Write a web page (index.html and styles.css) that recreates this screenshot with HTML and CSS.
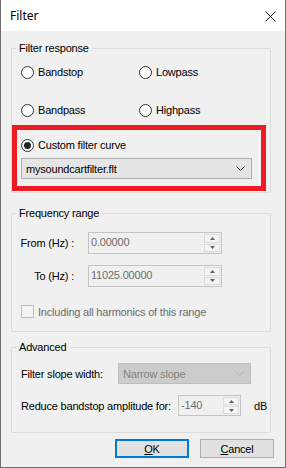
FILE: index.html
```html
<!DOCTYPE html>
<html lang="en">
<head>
    <meta charset="UTF-8">
    <title>Filter</title>
    <link rel="stylesheet" href="styles.css">
</head>
<body>
    <div class="window">
        <div class="titlebar">
            <span class="title">Filter</span>
            <svg class="close" width="11" height="11" viewBox="0 0 11 11">
                <path d="M0.5 0.5 L10.5 10.5 M10.5 0.5 L0.5 10.5" stroke="#111" stroke-width="1" fill="none"/>
            </svg>
        </div>

        <div class="content">
            <fieldset class="group group-response">
                <legend>Filter response</legend>
                <div class="radio-grid">
                    <label class="radio"><span class="circle"></span>Bandstop</label>
                    <label class="radio"><span class="circle"></span>Lowpass</label>
                    <label class="radio"><span class="circle"></span>Bandpass</label>
                    <label class="radio"><span class="circle"></span>Highpass</label>
                </div>
                <label class="radio custom"><span class="circle checked"></span>Custom filter curve</label>
                <div class="combo">
                    <span>mysoundcartfilter.flt</span>
                    <svg width="9" height="5" viewBox="0 0 9 5"><path d="M0.5 0.5 L4.5 4.5 L8.5 0.5" stroke="#333" fill="none"/></svg>
                </div>
            </fieldset>

            <fieldset class="group group-range">
                <legend>Frequency range</legend>
                <div class="field-row">
                    <span class="field-label">From (Hz) :</span>
                    <div class="spin spin-wide">
                        <span class="value">0.00000</span>
                        <div class="arrows">
                            <span><svg width="5" height="3" viewBox="0 0 5 3"><path d="M2.5 0 L5 3 L0 3 Z" fill="#606060"/></svg></span>
                            <span><svg width="5" height="3" viewBox="0 0 5 3"><path d="M0 0 L5 0 L2.5 3 Z" fill="#606060"/></svg></span>
                        </div>
                    </div>
                </div>
                <div class="field-row row-to">
                    <span class="field-label">To (Hz) :</span>
                    <div class="spin spin-wide">
                        <span class="value">11025.00000</span>
                        <div class="arrows">
                            <span><svg width="5" height="3" viewBox="0 0 5 3"><path d="M2.5 0 L5 3 L0 3 Z" fill="#606060"/></svg></span>
                            <span><svg width="5" height="3" viewBox="0 0 5 3"><path d="M0 0 L5 0 L2.5 3 Z" fill="#606060"/></svg></span>
                        </div>
                    </div>
                </div>
                <label class="check"><span class="box"></span>Including all harmonics of this range</label>
            </fieldset>

            <fieldset class="group group-advanced">
                <legend>Advanced</legend>
                <div class="adv-row">
                    <span class="adv-label">Filter slope width:</span>
                    <div class="combo combo-disabled">
                        <span>Narrow slope</span>
                        <svg width="9" height="5" viewBox="0 0 9 5"><path d="M0.5 0.5 L4.5 4.5 L8.5 0.5" stroke="#b4b4b4" fill="none"/></svg>
                    </div>
                </div>
                <div class="adv-row row-amp">
                    <span class="amp-label">Reduce bandstop amplitude for:</span>
                    <div class="spin spin-small">
                        <span class="value">-140</span>
                        <div class="arrows">
                            <span><svg width="5" height="3" viewBox="0 0 5 3"><path d="M2.5 0 L5 3 L0 3 Z" fill="#606060"/></svg></span>
                            <span><svg width="5" height="3" viewBox="0 0 5 3"><path d="M0 0 L5 0 L2.5 3 Z" fill="#606060"/></svg></span>
                        </div>
                    </div>
                    <span class="unit">dB</span>
                </div>
            </fieldset>

            <div class="buttons">
                <button class="btn btn-default"><u>O</u>K</button>
                <button class="btn"><u>C</u>ancel</button>
            </div>
        </div>

        <!-- annotation drawn over the dialog -->
        <div class="highlight"></div>
    </div>
</body>
</html>
```

FILE: styles.css
```css
body { margin: 0; font-family: "Liberation Sans", Arial, sans-serif; font-size: 11px; letter-spacing: -0.2px; color: #000; }
.window { position: relative; width: 286px; height: 468px; box-sizing: border-box; border: 1px solid #707070; border-top: none; background: #f0f0f0; }
.titlebar { height: 31px; background: #fff; display: flex; align-items: center; justify-content: space-between; padding: 0 9px 0 9px; font-family: "Noto Sans", sans-serif; font-size: 12px; letter-spacing: 0; }
.close { margin-top: 1px; }
.content { padding-left: 10px; }

.group { width: 260px; box-sizing: border-box; margin: 0; border: 1px solid #dcdcdc; padding: 0 0 0 9px; min-width: 0; }
.group legend { margin-left: -5px; padding: 0 3px; line-height: 13px; }
.group-response { margin-top: 11px; padding-top: 11px; padding-bottom: 13px; }
.group-range { margin-top: 14px; padding-top: 12px; padding-bottom: 13px; }
.group-advanced { margin-top: 9px; padding-top: 9px; padding-bottom: 16px; }

.radio-grid { display: grid; grid-template-columns: 118px 1fr; row-gap: 25px; }
.radio { display: flex; align-items: center; height: 13px; line-height: 13px; }
.circle { width: 13px; height: 13px; box-sizing: border-box; border: 1px solid #333; border-radius: 50%; background: #fff; margin-right: 4px; flex: none; display: flex; align-items: center; justify-content: center; }
.circle.checked::after { content: ""; width: 7px; height: 7px; border-radius: 50%; background: #222; }
.custom { margin-top: 22px; }

.combo { width: 231px; height: 21px; box-sizing: border-box; border: 1px solid #adadad; background: #e5e5e5; display: flex; align-items: center; justify-content: space-between; padding: 0 6px 0 4px; margin-top: 6px; white-space: nowrap; }
.combo-disabled { width: 133px; margin-top: 0; background: #cccccc; border-color: #bfbfbf; color: #838383; }

.field-row { display: flex; align-items: center; }
.row-to { margin-top: 11px; }
.field-label { width: 53px; flex: none; display: flex; justify-content: flex-end; white-space: nowrap; margin-right: 14px; }
.spin { display: flex; height: 22px; box-sizing: border-box; border: 1px solid #c4c4c4; background: #f0f0f0; flex: none; }
.spin-wide { width: 134px; }
.spin-small { width: 63px; height: 21px; }
.spin .value { flex: 1; padding-left: 2px; line-height: 18px; color: #6d6d6d; }
.arrows { display: flex; flex-direction: column; width: 17px; padding: 1px 1px 1px 0; box-sizing: border-box; gap: 1px; }
.arrows span { flex: 1; border: 1px solid #dcdcdc; background: #f4f4f4; display: flex; align-items: center; justify-content: center; }

.check { display: flex; align-items: center; height: 13px; margin-top: 18px; color: #6d6d6d; white-space: nowrap; }
.box { width: 13px; height: 13px; box-sizing: border-box; border: 1px solid #bcbcbc; background: #f4f4f4; margin-right: 4px; }

.adv-row { display: flex; align-items: center; white-space: nowrap; }
.adv-label { width: 97px; flex: none; }
.row-amp { margin-top: 11px; }
.amp-label { width: 157px; flex: none; }
.unit { margin-left: 13px; }

.buttons { display: flex; justify-content: flex-end; gap: 11px; width: 263px; margin-top: 6px; }
.btn { width: 74px; height: 19px; box-sizing: border-box; border: 1px solid #adadad; background: #e1e1e1; font-family: inherit; font-size: 11px; letter-spacing: -0.2px; padding: 0; color: #000; }
.btn-default { border: 2px solid #0078d7; }

.highlight { position: absolute; left: 11px; top: 125px; width: 254px; height: 66px; box-sizing: border-box; border: 5px solid #ed1c24; }
```
